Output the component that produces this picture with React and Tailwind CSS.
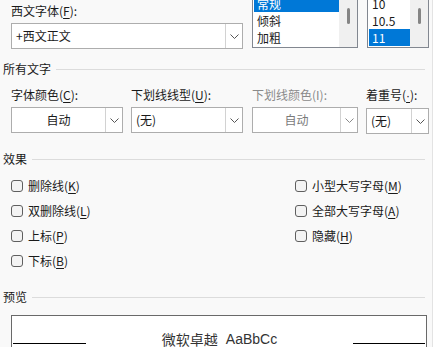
import React from "react";

const font = { fontFamily: '"Noto Sans CJK SC", "Noto Sans", sans-serif' };
const latin = { fontFamily: '"Liberation Sans", Arial, sans-serif' };

function Chevron({ muted }) {
    return (
        <svg width="9" height="5" viewBox="0 0 9 5" fill="none">
            <polyline points="0.5,0.5 4.5,4.5 8.5,0.5" stroke={muted ? "#8a8a8a" : "#555"} strokeWidth="1" />
        </svg>
    );
}

function Combo({ value, center, muted, className }) {
    return (
        <div className={"flex h-[26px] border border-[#adadad] bg-white " + className}>
            <div
                className={
                    "flex flex-1 items-center px-[4px] " +
                    (center ? "justify-center " : "") +
                    (muted ? "text-[#7a7a7a]" : "text-[#1a1a1a]")
                }
            >
                {value}
            </div>
            <div className="flex w-[17px] items-center justify-center border-l border-[#d2d2d2]">
                <Chevron muted={muted} />
            </div>
        </div>
    );
}

function Header({ title, className }) {
    return (
        <div className={"flex items-center pr-[7px] " + className}>
            <span className="text-[#1a1a1a]">{title}</span>
            <div className="ml-[5px] h-px flex-1 bg-[#dcdcdc]" />
        </div>
    );
}

function Check({ label, k }) {
    return (
        <div className="flex h-[16px] items-center">
            <div className="h-[12px] w-[12px] rounded-[3px] border border-[#5f5f5f] bg-[#f3f3f3]" />
            <span className="ml-[5px] text-[#1a1a1a]">
                {label}(<u className="underline-offset-2">{k}</u>)
            </span>
        </div>
    );
}

function ListBox({ items, selected, className }) {
    return (
        <div className={"-mt-[9px] flex h-[54px] border border-[#828790] bg-white " + className}>
            <div className="flex flex-1 flex-col pl-px">
                {items.map((it, i) => (
                    <div
                        key={it}
                        className={
                            "flex h-[17px] items-center px-[3px] " +
                            (i === selected ? "bg-[#0078d7] text-white" : "text-[#1a1a1a]")
                        }
                    >
                        {it}
                    </div>
                ))}
            </div>
            <div className="flex w-[18px] justify-center bg-[#f0f0f0] pt-[13px]">
                <div className="h-[16px] w-[3px] rounded-full bg-[#858585]" />
            </div>
        </div>
    );
}

export default function App() {
    return (
        <div className="flex h-[347px] w-[435px] overflow-hidden bg-[#f9f9f9] text-[12px] leading-[16px]" style={font}>
            <div className="flex w-[432px] flex-col pl-[3px]">
                {/* font row */}
                <div className="flex items-start pt-[3px] pl-[8px]">
                    <div className="w-[232px]">
                        <div className="text-[#1a1a1a]">
                            西文字体(<u className="underline-offset-2">F</u>):
                        </div>
                        <Combo value="+西文正文" className="mt-[4px] h-[25px]" />
                    </div>
                    <ListBox items={["常规", "倾斜", "加粗"]} selected={0} className="ml-[9px] w-[106px]" />
                    <ListBox items={["10", "10.5", "11"]} selected={2} className="ml-[9px] w-[62px]" />
                </div>

                <Header title="所有文字" className="mt-[12px]" />

                <div className="mt-[10px] flex pl-[8px]">
                    <div className="w-[112px]">
                        <div className="text-[#1a1a1a]">
                            字体颜色(<u className="underline-offset-2">C</u>):
                        </div>
                        <Combo value="自动" center className="mt-[4px]" />
                    </div>
                    <div className="ml-[8px] w-[112px]">
                        <div className="text-[#1a1a1a]">
                            下划线线型(<u className="underline-offset-2">U</u>):
                        </div>
                        <Combo value="(无)" className="mt-[4px]" />
                    </div>
                    <div className="ml-[9px] w-[106px]">
                        <div className="text-[#8a8a8a]">下划线颜色(I):</div>
                        <Combo value="自动" center muted className="mt-[4px]" />
                    </div>
                    <div className="ml-[8px] w-[63px]">
                        <div className="text-[#1a1a1a]">
                            着重号(<u className="underline-offset-2" style={latin}>·</u>):
                        </div>
                        <Combo value="(无)" className="mt-[4px]" />
                    </div>
                </div>

                <Header title="效果" className="mt-[17px]" />

                <div className="mt-[11px] flex pl-[8px]">
                    <div className="flex w-[284px] flex-col gap-[9px]">
                        <Check label="删除线" k="K" />
                        <Check label="双删除线" k="L" />
                        <Check label="上标" k="P" />
                        <Check label="下标" k="B" />
                    </div>
                    <div className="flex flex-col gap-[9px]">
                        <Check label="小型大写字母" k="M" />
                        <Check label="全部大写字母" k="A" />
                        <Check label="隐藏" k="H" />
                    </div>
                </div>

                <Header title="预览" className="mt-[20px]" />

                <div className="mt-[10px] ml-[8px] mr-[5px] h-[60px] border border-[#696969] bg-white">
                    <div className="mt-[14px] flex items-end px-px">
                        <div className="mb-[4px] h-px w-[73px] bg-black" />
                        <div className="flex flex-1 justify-center gap-[8px] text-[14px] leading-[18px] text-[#333]">
                            <span>微软卓越</span>
                            <span style={latin}>AaBbCc</span>
                        </div>
                        <div className="mb-[4px] h-px w-[72px] bg-black" />
                    </div>
                </div>
            </div>
            <div className="w-px bg-[#e3e3e3]" />
            <div className="w-[2px] bg-white" />
        </div>
    );
}
